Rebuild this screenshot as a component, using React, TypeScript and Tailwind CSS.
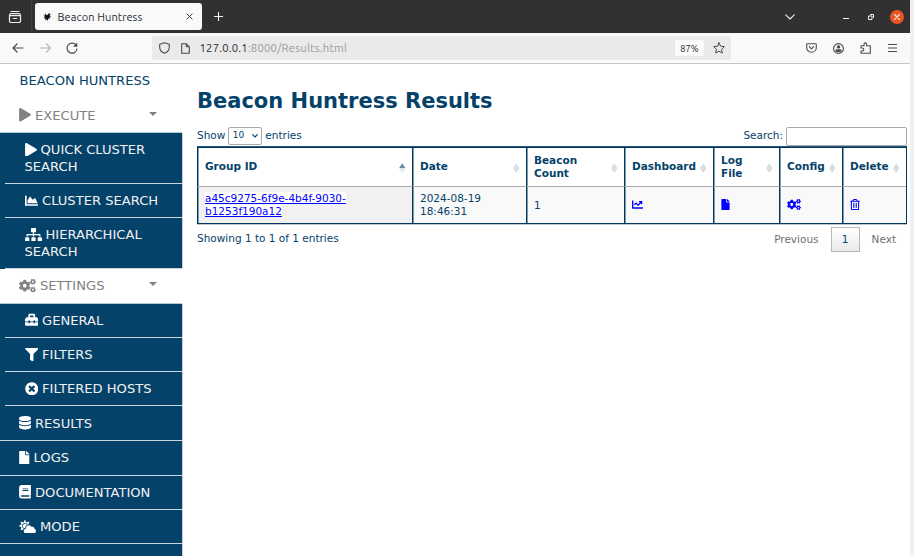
import React from "react";
import {
  FaPlay, FaChartArea, FaSitemap, FaCogs, FaToolbox, FaFilter, FaTimesCircle,
  FaDatabase, FaFile, FaBook, FaCloudSun, FaChartLine, FaRegTrashAlt,
} from "react-icons/fa";

type IconType = React.ComponentType<{ className?: string }>;

const stroke = {
  fill: "none",
  stroke: "currentColor",
  strokeLinecap: "round" as const,
  strokeLinejoin: "round" as const,
};

function TabBar() {
  return (
    <div className="flex h-[33px] items-center bg-[#323031] text-[#f0f0f0]">
      <div className="flex h-full w-[32px] items-center border-r border-[#403e3f] pl-[8px]">
        <svg className="h-[14px] w-[14px]" viewBox="0 0 14 14" {...stroke} strokeWidth="1.2">
          <path d="M3 1.500h8M3 3.700h8a1.500 1.500 0 0 1 1.500 1.500v5.800a1.500 1.500 0 0 1-1.500 1.500H3A1.500 1.500 0 0 1 1.500 11V5.200A1.500 1.500 0 0 1 3 3.700zM1.500 5.700h11M5.300 8.500h3.400" />
        </svg>
      </div>
      <div className="ml-[3px] flex h-[27px] w-[167px] items-center rounded-[3px] bg-[#f9f9fa] text-[#2b2a33]">
        <svg className="ml-[7px] h-[10px] w-[10px] shrink-0" viewBox="0 0 10 10" fill="#151515">
          <path d="M1 3l1.500 1L3 1.500l1.500 1.500L5.300 3 7.500 .5V2.500L9 2 7.500 4l1.500.5L7.500 5.500 8.500 6.500 6.500 6.500 5.500 9 5 7.500 3 8 3.500 6.500 1.500 6 3 5z" />
        </svg>
        <span className="mt-px ml-[5.500px] w-[92px] whitespace-nowrap text-[11px] tracking-[0.100px]">Beacon Huntress</span>
        <svg className="ml-[36.500px] h-[7px] w-[7px]" viewBox="0 0 8 8" {...stroke} strokeWidth="1">
          <path d="M1 1l6 6M7 1L1 7" />
        </svg>
      </div>
      <svg className="ml-[12px] h-[9px] w-[9px]" viewBox="0 0 9 9" {...stroke} strokeWidth="1.1">
        <path d="M4.500 0v9M0 4.500h9" />
      </svg>
      <svg className="ml-auto h-[6px] w-[10px]" viewBox="0 0 10 6" {...stroke} strokeWidth="1.1">
        <path d="M.8.8L5 5 9.200.8" />
      </svg>
      <div className="mt-[4px] ml-[48px] h-px w-[6px] bg-[#f0f0f0]" />
      <svg className="ml-[19px] h-[6px] w-[6px]" viewBox="0 0 6 6" fill="none" stroke="currentColor" strokeWidth="1">
        <path d="M.5 2h3.500v3.500H.500zM2 .5h3.500V4" />
      </svg>
      <div className="mr-[6px] ml-[16px] flex h-[14px] w-[14px] items-center justify-center rounded-full bg-[#e95420]">
        <svg className="h-[6px] w-[6px]" viewBox="0 0 6 6" {...stroke} strokeWidth="1.1">
          <path d="M.5.5l5 5M5.500.500l-5 5" />
        </svg>
      </div>
    </div>
  );
}

function NavBar() {
  return (
    <div className="flex h-[31px] items-center border-b border-[#c7c7c8] bg-[#f9f9fa] text-[#4a4a50]">
      <svg className="ml-[12px] h-[10px] w-[12px]" viewBox="0 0 12 10" {...stroke} strokeWidth="1.200">
        <path d="M5 1L1 5l4 4M1 5h10" />
      </svg>
      <svg className="ml-[16px] h-[10px] w-[11px] text-[#b5b5b8]" viewBox="0 0 11 10" {...stroke} strokeWidth="1.200">
        <path d="M6.500 1l4 4-4 4M10.500 5h-10" />
      </svg>
      <svg className="ml-[15px] h-[12px] w-[12px]" viewBox="0 0 12 12" {...stroke} strokeWidth="1.200">
        <path d="M10.300 3.500a5 5 0 1 0 .7 3.500" />
        <path d="M11.300 .5V4.700H7.100z" fill="currentColor" stroke="none" />
      </svg>
      <div className="ml-[74px] flex h-[24px] w-[579px] items-center rounded-[3px] bg-[#eaeaeb]">
        <svg className="ml-[7px] h-[12px] w-[11px]" viewBox="0 0 11 12" {...stroke} strokeWidth="1.100">
          <path d="M5.500.7l4.800 1.500v3c0 2.800-2 5-4.800 6.100C2.700 10.200.7 8 .7 5.200v-3z" />
        </svg>
        <svg className="ml-[11px] h-[11px] w-[9px]" viewBox="0 0 9 11" {...stroke} strokeWidth="1.100">
          <path d="M.7.700h4.500L8.300 3.800v6.500H.7zM5.200.700v3.100h3.100" />
        </svg>
        <span className="mt-px ml-[9.500px] whitespace-nowrap text-[11.300px] tracking-[0.200px] text-[#9a9a9e]">
          <span className="text-[#2b2a33]">127.0.0.1</span>:8000/Results.html
        </span>
        <span className="ml-auto flex h-[16px] w-[29px] items-center justify-center rounded-[2px] bg-[#fbfbfb] pt-px text-[9.300px] text-[#2b2a33]">87%</span>
        <svg className="mr-[6px] ml-[9px] h-[12px] w-[12px]" viewBox="0 0 12 12" {...stroke} strokeWidth="1">
          <path d="M6 .8l1.600 3.400 3.700.5-2.700 2.600.7 3.700L6 9.200 2.700 11l.7-3.700L.7 4.700l3.700-.5z" />
        </svg>
      </div>
      <svg className="ml-[74.500px] h-[10px] w-[11px]" viewBox="0 0 11 10" {...stroke} strokeWidth="1.100">
        <path d="M1.500.7h8q.8 0 .8.8v3.200a4.800 4.500 0 0 1-9.600 0V1.500q0-.8.8-.8zM3.300 3.700l2.200 2.100 2.200-2.100" />
      </svg>
      <svg className="ml-[16.500px] h-[11px] w-[11px]" viewBox="0 0 11 11">
        <circle cx="5.500" cy="5.500" r="4.900" fill="none" stroke="currentColor" strokeWidth="1.100" />
        <circle cx="5.500" cy="3.900" r="1.700" fill="currentColor" />
        <path d="M2.500 8.200V7.500q0-1.300 1.300-1.300h3.400q1.300 0 1.300 1.300v.7Q5.500 10 2.500 8.200z" fill="currentColor" />
      </svg>
      <svg className="ml-[16px] h-[12px] w-[11px]" viewBox="0 0 11 12" {...stroke} strokeWidth="1.100">
        <path d="M1 6V3.700h3V2.200a1.300 1.300 0 0 1 2.600 0v1.500h3.700v7.600H1V9h1.300a1.400 1.400 0 0 0 0-3z" />
      </svg>
      <svg className="ml-[17px] h-[8px] w-[9px]" viewBox="0 0 9 8" stroke="currentColor" strokeWidth="1">
        <path d="M0 .5h9M0 4h9M0 7.500h9" />
      </svg>
    </div>
  );
}

type Item = { label: string; icon: IconType; size: string; row: string; head?: boolean; sub?: boolean };

const items: Item[] = [
  { label: "EXECUTE", icon: FaPlay, size: "w-[12px]", row: "h-[35px]", head: true },
  { label: "QUICK CLUSTER SEARCH", icon: FaPlay, size: "w-[12px]", row: "h-[51px]", sub: true },
  { label: "CLUSTER SEARCH", icon: FaChartArea, size: "w-[13.500px]", row: "h-[34px]", sub: true },
  { label: "HIERARCHICAL SEARCH", icon: FaSitemap, size: "w-[17px]", row: "h-[51px]", sub: true },
  { label: "SETTINGS", icon: FaCogs, size: "w-[17px]", row: "h-[35px] pb-px", head: true },
  { label: "GENERAL", icon: FaToolbox, size: "w-[13.500px]", row: "h-[34px] pb-px", sub: true },
  { label: "FILTERS", icon: FaFilter, size: "w-[13.500px]", row: "h-[34px]", sub: true },
  { label: "FILTERED HOSTS", icon: FaTimesCircle, size: "w-[13.500px]", row: "h-[34px]", sub: true },
  { label: "RESULTS", icon: FaDatabase, size: "w-[12px]", row: "h-[35px]" },
  { label: "LOGS", icon: FaFile, size: "w-[10.500px]", row: "h-[35px] pb-px" },
  { label: "DOCUMENTATION", icon: FaBook, size: "w-[12px]", row: "h-[34px] pb-px" },
  { label: "MODE", icon: FaCloudSun, size: "w-[17px]", row: "h-[34px]" },
];

function Sidebar() {
  return (
    <nav className="w-[182px] shrink-0 bg-[#05426a] text-[13.100px] leading-[17px] text-[#f1f1f1] shadow-[1px_0_0_#c5d2db]">
      <div className="flex h-[34px] items-center bg-white pb-[2px] pl-[19.500px] text-[#05426a] shadow-[1px_0_0_#fff]">BEACON HUNTRESS</div>
      {items.map(({ label, icon: Icon, size, row, head, sub }) => (
        <div
          key={label}
          className={`${row} flex items-center border-b ${
            head
              ? "border-[#b4c6d2] bg-white pl-[19px] text-[#818181] shadow-[1px_0_0_#fff]"
              : sub
                ? "ml-[5px] border-[#c9d5dd] pl-[19.500px]"
                : "border-[#c9d5dd] pl-[19px]"
          }`}
        >
          <span className={head ? "w-[130px]" : "w-[138px]"}>
            <Icon className={`${size} mr-[4px] inline-block h-[13.500px] align-[-2px] ${head ? "" : "text-white"}`} />
            {label}
          </span>
          {head && <span className="mb-[3px] border-x-[4px] border-t-[4.500px] border-x-transparent border-t-[#818181]" />}
        </div>
      ))}
    </nav>
  );
}

function SortMark({ active }: { active?: boolean }) {
  return (
    <svg className="mt-px ml-auto h-[10px] w-[6.500px] shrink-0" viewBox="0 0 7 10">
      <path d="M3.500 0L7 5.300H0z" fill={active ? "#658ba5" : "#d5dfe6"} />
      <path d="M3.500 10L7 5.300H0z" fill={active ? "#e3e8eb" : "#d5dae0"} />
    </svg>
  );
}

const cols = "grid grid-cols-[215px_114px_98px_89px_66px_63px_64px]";
const headers = ["Group ID", "Date", "Beacon Count", "Dashboard", "Log File", "Config", "Delete"];

function ResultsTable() {
  const cell = "flex items-center border-l border-l-[#04385a] pl-[7px] shadow-[inset_1px_0_0_#7d9cb0]";
  const bodyCell = `${cell} border-t border-t-[#aaa]`;
  const link = "pb-px text-[#0000ff]";
  return (
    <div className="w-[710px] border-r border-b border-[#04385a] leading-[13px] shadow-[0_1px_0_#b9c8d2]">
      <div className="h-px bg-[#24577a]" />
      <div className="h-px bg-[#04385a]" />
      <div className={`${cols} h-[38px] font-bold`}>
        {headers.map((h, i) => (
          <div key={h} className={`${cell} pr-[6.500px]`}>
            <span className={i === 2 || i === 4 ? "mb-px w-[45px]" : "mb-px"}>{h}</span>
            <SortMark active={i === 0} />
          </div>
        ))}
      </div>
      <div className={`${cols} h-[37px] bg-[#f9f9f9]`}>
        <div className={`${bodyCell} bg-[#f1f1f1]`}>
          <a className="w-[150px] text-[#0000ff] underline">
            <span className="bg-white">a45c9275-6f9e-4b4f-9030-b1253f190a12</span>
          </a>
        </div>
        <div className={bodyCell}><span className="w-[70px]">2024-08-19 18:46:31</span></div>
        <div className={bodyCell}>1</div>
        <div className={`${bodyCell} ${link}`}><FaChartLine className="h-[11px] w-[11px]" /></div>
        <div className={`${bodyCell} ${link}`}><FaFile className="h-[11px] w-[9px]" /></div>
        <div className={`${bodyCell} ${link}`}><FaCogs className="h-[11px] w-[14px]" /></div>
        <div className={`${bodyCell} ${link}`}><FaRegTrashAlt className="h-[11px] w-[10px]" /></div>
      </div>
    </div>
  );
}

export default function App() {
  return (
    <div className="flex h-[556px] w-[914px] overflow-hidden bg-[#f0f0f0] font-['DejaVu_Sans',sans-serif]">
      <div className="flex w-[910px] flex-col bg-white">
        <header className="font-['Ubuntu','Noto_Sans',sans-serif]">
          <TabBar />
          <NavBar />
        </header>
        <div className="flex min-h-0 flex-1">
          <Sidebar />
          <main className="pl-[15px] text-[10.500px] text-[#05426a]">
            <h1 className="mt-[23px] text-[21px] leading-[28px] font-bold">Beacon Huntress Results</h1>
            <div className="mt-[11px] flex h-[20px] w-[710px] items-center">
              <span>Show</span>
              <span className="mr-[3px] ml-[3px] flex h-[18px] w-[34px] items-center rounded-[2px] border border-[#aaa] pl-[3.500px] text-[9px]">
                10
                <svg className="mr-[3px] ml-auto h-[4px] w-[6px]" viewBox="0 0 6 4" {...stroke} strokeWidth="1.100"><path d="M.7.7L3 3 5.300.7" /></svg>
              </span>
              <span>entries</span>
              <label className="ml-auto flex items-center">
                Search:
                <input className="ml-[3px] h-[19px] w-[121px] rounded-[2px] border border-[#aaa]" />
              </label>
            </div>
            <ResultsTable />
            <div className="flex w-[710px] pt-[3px]">
              <span className="mt-[4px]">Showing 1 to 1 of 1 entries</span>
              <div className="ml-auto flex h-[25px] items-center text-[#707070]">
                <span>Previous</span>
                <span className="mr-[12px] ml-[12px] flex h-[25px] w-[29px] items-center justify-center border border-[#b8b8b8] bg-linear-to-b from-white to-[#e9e9e9] text-[#05426a]">1</span>
                <span className="mr-[11px]">Next</span>
              </div>
            </div>
          </main>
        </div>
      </div>
    </div>
  );
}
